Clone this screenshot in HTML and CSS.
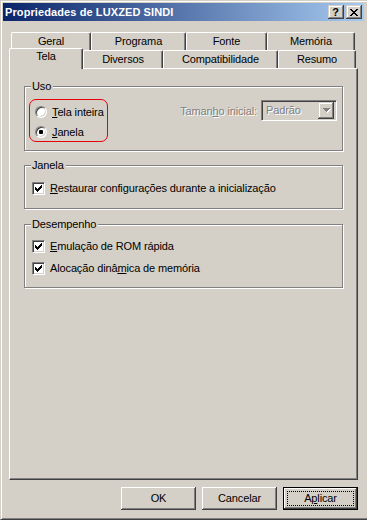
FILE: index.html
```html
<!DOCTYPE html>
<html lang="pt-BR">
<head>
<meta charset="utf-8">
<title>Propriedades de LUXZED SINDI</title>
<link rel="stylesheet" href="styles.css">
</head>
<body>
<div class="window">
  <div class="titlebar">
    <span class="title">Propriedades de LUXZED SINDI</span>
    <div class="caption-buttons">
      <span class="cap-btn help">?</span>
      <span class="cap-btn close">
        <svg width="8" height="7" viewBox="0 0 8 7" shape-rendering="crispEdges">
          <path d="M0 0h2v1h-2zM6 0h2v1h-2zM1 1h2v1h-2zM5 1h2v1h-2zM2 2h4v1h-4zM3 3h2v1h-2zM2 4h4v1h-4zM1 5h2v1h-2zM5 5h2v1h-2zM0 6h2v1h-2zM6 6h2v1h-2z" fill="#000"/>
        </svg>
      </span>
    </div>
  </div>

  <div class="tabs">
    <div class="tab-row back">
      <div class="tab t-geral">Geral</div>
      <div class="tab t-programa">Programa</div>
      <div class="tab t-fonte">Fonte</div>
      <div class="tab t-memoria">Memória</div>
    </div>
    <div class="tab-row front">
      <div class="tab t-tela selected">Tela</div>
      <div class="tab t-diversos">Diversos</div>
      <div class="tab t-compat">Compatibilidade</div>
      <div class="tab t-resumo">Resumo</div>
    </div>
  </div>

  <div class="panel">
    <div class="group g-uso">
      <div class="legend">Uso</div>
      <div class="uso-body">
        <div class="highlight">
          <div class="option">
            <span class="radio"></span>
            <span class="label"><u>T</u>ela inteira</span>
          </div>
          <div class="option">
            <span class="radio checked"><span class="dot"></span></span>
            <span class="label"><u>J</u>anela</span>
          </div>
        </div>
        <div class="size-field">
          <span class="disabled-text">Taman<u>h</u>o inicial:</span>
          <div class="combo">
            <span class="combo-value disabled-text">Padrão</span>
            <span class="drop">
              <svg width="8" height="5" viewBox="0 0 8 5" shape-rendering="crispEdges">
                <path d="M1 1h7v1h-7zM2 2h5v1h-5zM3 3h3v1h-3zM4 4h1v1h-1z" fill="#fff"/>
                <path d="M0 0h7v1h-7zM1 1h5v1h-5zM2 2h3v1h-3zM3 3h1v1h-1z" fill="#808080"/>
              </svg>
            </span>
          </div>
        </div>
      </div>
    </div>

    <div class="group g-janela">
      <div class="legend">Janela</div>
      <div class="check-row first">
        <span class="checkbox">
          <svg width="7" height="7" viewBox="0 0 7 7" shape-rendering="crispEdges">
            <path d="M0 2h1v3h-1zM1 3h1v3h-1zM2 4h1v3h-1zM3 3h1v3h-1zM4 2h1v3h-1zM5 1h1v3h-1zM6 0h1v3h-1z" fill="#000"/>
          </svg>
        </span>
        <span class="label"><u>R</u>estaurar configurações durante a inicialização</span>
      </div>
    </div>

    <div class="group g-desempenho">
      <div class="legend">Desempenho</div>
      <div class="check-row first">
        <span class="checkbox">
          <svg width="7" height="7" viewBox="0 0 7 7" shape-rendering="crispEdges">
            <path d="M0 2h1v3h-1zM1 3h1v3h-1zM2 4h1v3h-1zM3 3h1v3h-1zM4 2h1v3h-1zM5 1h1v3h-1zM6 0h1v3h-1z" fill="#000"/>
          </svg>
        </span>
        <span class="label"><u>E</u>mulação de ROM rápida</span>
      </div>
      <div class="check-row second">
        <span class="checkbox">
          <svg width="7" height="7" viewBox="0 0 7 7" shape-rendering="crispEdges">
            <path d="M0 2h1v3h-1zM1 3h1v3h-1zM2 4h1v3h-1zM3 3h1v3h-1zM4 2h1v3h-1zM5 1h1v3h-1zM6 0h1v3h-1z" fill="#000"/>
          </svg>
        </span>
        <span class="label">Alocação dinâ<u>m</u>ica de memória</span>
      </div>
    </div>
  </div>

  <div class="buttons">
    <div class="btn">OK</div>
    <div class="btn">Cancelar</div>
    <div class="btn focused"><span class="focus-rect">A<u>p</u>licar</span></div>
  </div>
</div>
</body>
</html>
```

FILE: styles.css
```css
* { box-sizing: border-box; }

html, body {
  margin: 0;
  padding: 0;
  background: #D4D0C8;
}

body {
  font-family: "Liberation Sans", Arial, sans-serif;
  font-size: 11px;
  letter-spacing: -0.13px;
  color: #000;
}

u { text-underline-offset: 1px; }

.window {
  width: 367px;
  height: 520px;
  background: #D4D0C8;
  border-top: 1px solid #D4D0C8;
  border-left: 1px solid #D4D0C8;
  border-bottom: 1px solid #404040;
  box-shadow: inset 1px 1px 0 #fff, inset 0 -1px 0 #808080;
  padding: 2px 3px 0 2px;
  overflow: hidden;
}

/* Title bar */
.titlebar {
  height: 18px;
  display: flex;
  align-items: center;
  background: linear-gradient(to right, #0A246A, #A6CAF0);
  padding-left: 2px;
  padding-right: 2px;
}

.title {
  color: #fff;
  font-weight: bold;
  font-size: 11px;
  letter-spacing: 0.1px;
  flex: 1;
  white-space: nowrap;
}

.caption-buttons {
  display: flex;
  gap: 2px;
}

.cap-btn {
  width: 16px;
  height: 14px;
  background: #D4D0C8;
  box-shadow: inset -1px -1px 0 #404040, inset 1px 1px 0 #D4D0C8, inset -2px -2px 0 #808080, inset 2px 2px 0 #fff;
  display: flex;
  align-items: center;
  justify-content: center;
}

.cap-btn.help {
  font-weight: bold;
  font-size: 11px;
  line-height: 14px;
  padding-right: 1px;
}

.cap-btn.close svg { display: block; margin-left: -1px; }

/* Tabs */
.tabs {
  margin-top: 11px;
  margin-left: 6px;
}

.tab-row {
  display: flex;
}

.tab-row.back {
  margin-left: 2px;
  height: 18px;
}

.tab-row.front {
  height: 18px;
}

.tab {
  height: 18px;
  background: #D4D0C8;
  border-top: 1px solid #fff;
  border-left: 1px solid #fff;
  border-right: 1px solid #404040;
  box-shadow: inset -1px 0 0 #808080;
  border-top-left-radius: 2px;
  border-top-right-radius: 2px;
  text-align: center;
  line-height: 14px;
  padding-top: 1px;
  white-space: nowrap;
}

.t-geral { width: 80px; }
.t-programa { width: 95px; }
.t-fonte { width: 81px; }
.t-memoria { width: 88px; }

.t-tela { width: 74px; }
.t-diversos { width: 80px; }
.t-compat { width: 115px; }
.t-resumo { width: 78px; }

.tab.selected {
  position: relative;
  z-index: 1;
  height: 21px;
  margin-top: -2px;
  padding-top: 0;
}

/* Panel */
.panel {
  width: 349px;
  height: 412px;
  margin-left: 6px;
  border-top: 1px solid #fff;
  border-left: 1px solid #fff;
  border-right: 1px solid #404040;
  border-bottom: 1px solid #404040;
  box-shadow: inset -1px -1px 0 #808080;
  padding: 17px 0 0 14px;
}

/* Group boxes */
.group {
  width: 319px;
  border: 1px solid #808080;
  box-shadow: 1px 1px 0 #fff, inset 1px 1px 0 #fff;
}

.g-uso { height: 65px; }
.g-janela { height: 44px; margin-top: 14px; }
.g-desempenho { height: 64px; margin-top: 15px; }

.legend {
  width: fit-content;
  height: 13px;
  line-height: 13px;
  margin: -7px 0 -6px 6px;
  padding: 0 2px 0 1px;
  background: #D4D0C8;
}

.uso-body {
  display: flex;
  align-items: flex-start;
  padding-top: 12px;
}

.highlight {
  width: 79px;
  margin-left: 4px;
  border: 1px solid #E8000B;
  border-radius: 7px;
  padding: 6px 0 3px 5px;
  display: flex;
  flex-direction: column;
  gap: 8px;
}

.option {
  display: flex;
  align-items: center;
  height: 12px;
  gap: 5px;
}

.label {
  line-height: 13px;
  white-space: nowrap;
}

.radio {
  width: 12px;
  height: 12px;
  flex: none;
  border-radius: 50%;
  border: 1px solid;
  border-color: #808080 #fff #fff #808080;
  box-shadow: inset 1px 1px 0 #404040, inset -1px -1px 0 #D4D0C8;
  background: #fff;
  display: flex;
  align-items: center;
  justify-content: center;
}

.dot {
  width: 4px;
  height: 4px;
  border-radius: 1px;
  background: #000;
}

.size-field {
  margin-left: auto;
  margin-right: 5px;
  margin-top: 1px;
  display: flex;
  align-items: center;
  gap: 4px;
}

.disabled-text {
  color: #808080;
  text-shadow: 1px 1px 0 #fff;
}

.combo {
  width: 76px;
  height: 21px;
  border: 1px solid;
  border-color: #808080 #fff #fff #808080;
  box-shadow: inset 1px 1px 0 #404040, inset -1px -1px 0 #D4D0C8;
  padding: 2px 2px 2px 4px;
  display: flex;
  align-items: center;
  background: #D4D0C8;
}

.combo-value {
  flex: 1;
  line-height: 15px;
}

.drop {
  width: 16px;
  height: 17px;
  flex: none;
  background: #D4D0C8;
  box-shadow: inset -1px -1px 0 #404040, inset 1px 1px 0 #D4D0C8, inset -2px -2px 0 #808080, inset 2px 2px 0 #fff;
  display: flex;
  align-items: center;
  justify-content: center;
}

.drop svg { display: block; margin-left: 1px; }

/* Checkboxes */
.check-row {
  display: flex;
  align-items: center;
  height: 13px;
  margin-left: 7px;
  gap: 5px;
}

.g-janela .check-row.first { margin-top: 16px; }
.g-desempenho .check-row.first { margin-top: 15px; }
.check-row.second { margin-top: 9px; }

.checkbox {
  width: 13px;
  height: 13px;
  flex: none;
  border: 1px solid;
  border-color: #808080 #fff #fff #808080;
  box-shadow: inset 1px 1px 0 #404040, inset -1px -1px 0 #D4D0C8;
  background: #fff;
  padding: 2px;
}

.checkbox svg { display: block; }

/* Buttons */
.buttons {
  display: flex;
  justify-content: flex-end;
  gap: 6px;
  margin-top: 7px;
  padding-right: 6px;
}

.btn {
  width: 75px;
  height: 23px;
  background: #D4D0C8;
  box-shadow: inset -1px -1px 0 #404040, inset 1px 1px 0 #fff, inset -2px -2px 0 #808080, inset 2px 2px 0 #D4D0C8;
  display: flex;
  align-items: center;
  justify-content: center;
  line-height: 13px;
}

.btn.focused {
  border: 1px solid #000;
  padding: 3px;
}

.focus-rect {
  width: 100%;
  height: 100%;
  border: 1px dotted #000;
  display: flex;
  align-items: center;
  justify-content: center;
}
```
